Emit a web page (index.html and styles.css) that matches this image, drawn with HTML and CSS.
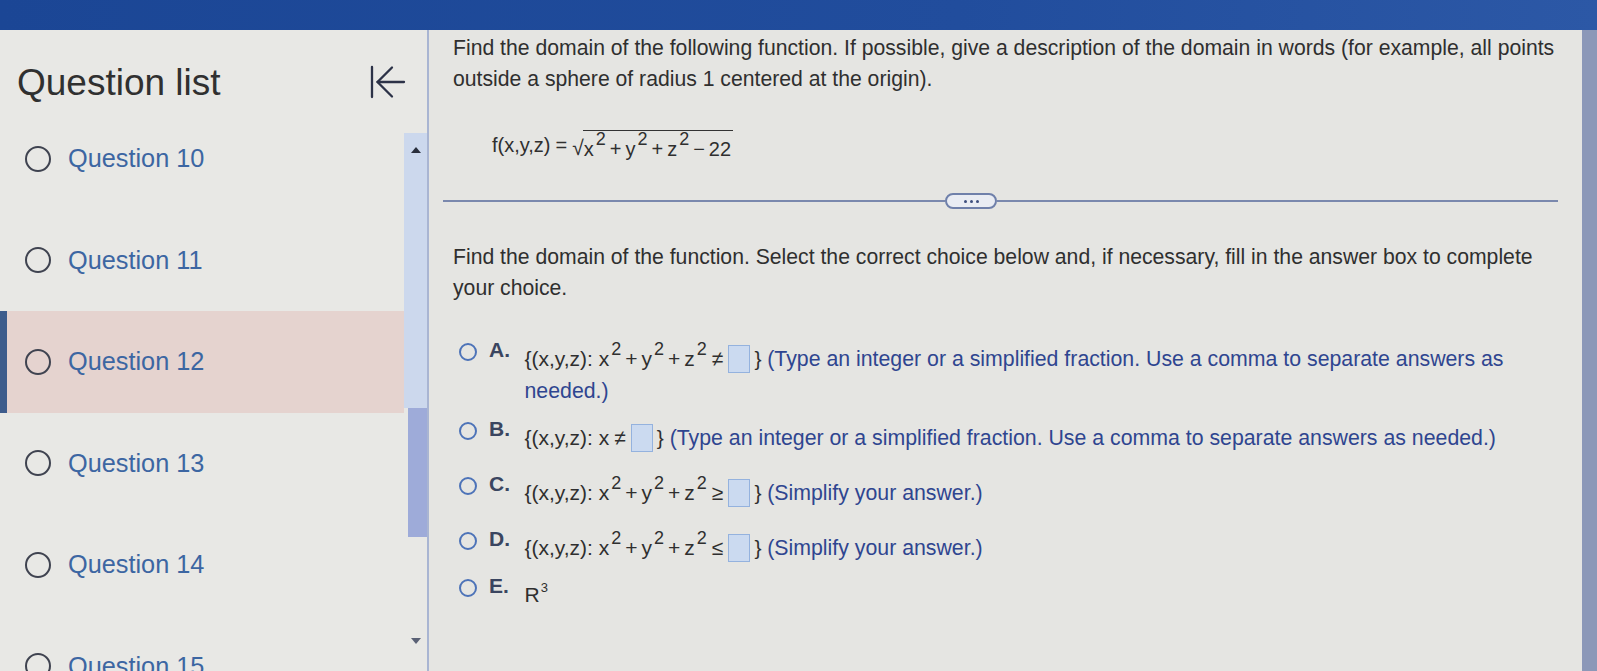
FILE: index.html
```html
<!DOCTYPE html>
<html lang="en">
<head>
<meta charset="utf-8">
<title>Question</title>
<link rel="stylesheet" href="styles.css">
</head>
<body>
<div class="topbar"></div>
<div class="app">
  <aside class="sidebar">
    <div class="side-head">
      <h1 class="side-title">Question list</h1>
      <button class="collapse" aria-label="Collapse question list">
        <svg width="36" height="34" viewBox="0 0 36 34" fill="none" stroke="#2c3247" stroke-width="2.3" stroke-linecap="round" stroke-linejoin="round">
          <path d="M2 2 V32"/>
          <path d="M7.5 17 H34"/>
          <path d="M22 2.5 L7.5 17 L22 31.5"/>
        </svg>
      </button>
    </div>
    <div class="side-body">
      <ul class="qlist">
        <li class="q"><span class="radio"></span><span class="qlabel">Question 10</span></li>
        <li class="q"><span class="radio"></span><span class="qlabel">Question 11</span></li>
        <li class="q current"><span class="radio"></span><span class="qlabel">Question 12</span></li>
        <li class="q"><span class="radio"></span><span class="qlabel">Question 13</span></li>
        <li class="q"><span class="radio"></span><span class="qlabel">Question 14</span></li>
        <li class="q"><span class="radio"></span><span class="qlabel">Question 15</span></li>
      </ul>
      <div class="vscroll">
        <div class="track-upper"><span class="arrow-up"></span></div>
        <div class="thumb"></div>
        <div class="track-lower"><span class="arrow-down"></span></div>
      </div>
    </div>
  </aside>

  <main class="content">
    <p class="prompt">Find the domain of the following function. If possible, give a description of the domain in words (for example, all points outside a sphere of radius 1 centered at the origin).</p>

    <div class="formula">
      <span>f(x,y,z)</span><span class="eq">=</span><span class="sqrt"><span class="rad">√</span><span class="radicand"><span>x</span><sup class="ex">2</sup><span class="op">+</span><span>y</span><sup class="ex">2</sup><span class="op">+</span><span>z</span><sup class="ex">2</sup><span class="op">−</span><span>22</span></span></span>
    </div>

    <div class="divider">
      <span class="rule"></span>
      <span class="more"><span class="dot"></span><span class="dot"></span><span class="dot"></span></span>
      <span class="rule"></span>
    </div>

    <p class="instr">Find the domain of the function. Select the correct choice below and, if necessary, fill in the answer box to complete your choice.</p>

    <ul class="options">
      <li class="opt sup">
        <span class="oradio"></span><span class="olabel">A.</span>
        <span class="obody"><span class="math"><span>{(x,y,z): x</span><sup class="ex">2</sup><span class="op">+</span><span>y</span><sup class="ex">2</sup><span class="op">+</span><span>z</span><sup class="ex">2</sup><span class="rel">≠</span><span class="box"></span><span>}</span></span> <span class="hint">(Type an integer or a simplified fraction. Use a comma to separate answers as</span> <span class="hint">needed.)</span></span>
      </li>
      <li class="opt">
        <span class="oradio"></span><span class="olabel">B.</span>
        <span class="obody"><span class="math"><span>{(x,y,z): x</span><span class="rel">≠</span><span class="box"></span><span>}</span></span> <span class="hint">(Type an integer or a simplified fraction. Use a comma to separate answers as needed.)</span></span>
      </li>
      <li class="opt sup">
        <span class="oradio"></span><span class="olabel">C.</span>
        <span class="obody"><span class="math"><span>{(x,y,z): x</span><sup class="ex">2</sup><span class="op">+</span><span>y</span><sup class="ex">2</sup><span class="op">+</span><span>z</span><sup class="ex">2</sup><span class="rel">≥</span><span class="box"></span><span>}</span></span> <span class="hint">(Simplify your answer.)</span></span>
      </li>
      <li class="opt sup">
        <span class="oradio"></span><span class="olabel">D.</span>
        <span class="obody"><span class="math"><span>{(x,y,z): x</span><sup class="ex">2</sup><span class="op">+</span><span>y</span><sup class="ex">2</sup><span class="op">+</span><span>z</span><sup class="ex">2</sup><span class="rel">≤</span><span class="box"></span><span>}</span></span> <span class="hint">(Simplify your answer.)</span></span>
      </li>
      <li class="opt">
        <span class="oradio"></span><span class="olabel">E.</span>
        <span class="obody"><span class="math"><span>R</span><sup class="cube">3</sup></span></span>
      </li>
    </ul>
  </main>

  <div class="edge"></div>
</div>
</body>
</html>
```

FILE: styles.css
```css
* { box-sizing: border-box; }

html, body {
  margin: 0;
  padding: 0;
  height: 100%;
  overflow: hidden;
}

body {
  background: #e5e5e2;
  font-family: "Liberation Sans", Arial, sans-serif;
  color: #2e2e2e;
}

.topbar {
  height: 30px;
  background: linear-gradient(90deg, #1b4695 0%, #214d9d 60%, #2c58a6 100%);
}

.app {
  display: flex;
  height: 641px;
}

/* ---------- sidebar ---------- */
.sidebar {
  width: 429px;
  flex: none;
  background: #e8e8e5;
  border-right: 2px solid #a9b5d2;
  display: flex;
  flex-direction: column;
}

.side-head {
  height: 78px;
  flex: none;
  display: flex;
  align-items: flex-start;
  justify-content: space-between;
  padding: 33px 0 0 17px;
}

.side-title {
  margin: 0;
  font-size: 37px;
  line-height: 40px;
  font-weight: 400;
  color: #303030;
}

.collapse {
  margin: 2px 21px 0 0;
  padding: 0;
  border: 0;
  background: none;
  width: 36px;
  height: 34px;
}
.collapse svg { display: block; }

.side-body {
  flex: 1;
  display: flex;
  min-height: 0;
  overflow: hidden;
}

.qlist {
  list-style: none;
  margin: 0;
  padding: 0;
  width: 404px;
  flex: none;
}

.q {
  height: 101.5px;
  display: flex;
  align-items: center;
  padding-left: 25px;
  position: relative;
}

.q.current { background: #e5d3cf; }
.q.current::before {
  content: "";
  position: absolute;
  left: 0;
  top: 0;
  bottom: 0;
  width: 7px;
  background: #3d5c8c;
}

.radio {
  width: 26px;
  height: 26px;
  border: 2.5px solid #3f4350;
  border-radius: 50%;
  flex: none;
}

.qlabel {
  margin-left: 17px;
  font-size: 25.3px;
  color: #3c66a2;
}

.vscroll {
  width: 23px;
  flex: none;
  margin-top: 25px;
  display: flex;
  flex-direction: column;
}

.track-upper {
  height: 275px;
  flex: none;
  background: #ccd8ed;
  display: flex;
  justify-content: center;
  padding-top: 14px;
}

.thumb {
  height: 129px;
  flex: none;
  margin-left: 4px;
  background: #9eabd9;
}

.track-lower {
  flex: 1;
  display: flex;
  justify-content: center;
  padding-top: 101px;
}

.arrow-up, .arrow-down {
  width: 0;
  height: 0;
  border-left: 5px solid transparent;
  border-right: 5px solid transparent;
}
.arrow-up { border-bottom: 6px solid #2a2f3d; }
.arrow-down { border-top: 6px solid #5a6175; }

/* ---------- main content ---------- */
.content {
  flex: 1;
  padding: 3px 0 0 24px;
  min-width: 0;
}

.prompt, .instr {
  margin: 0;
  font-size: 21.2px;
  color: #2f2f2f;
}

.prompt {
  width: 1115px;
  line-height: 30.5px;
}

.formula {
  margin: 31px 0 0 39px;
  height: 40px;
  display: flex;
  align-items: center;
  font-size: 20px;
  color: #2f2f2f;
}

.eq { margin: 0 5px 0 5px; }

.sqrt { display: inline-flex; align-items: flex-end; }
.rad { font-size: 21px; line-height: 25px; margin-right: -1px; }
.radicand {
  border-top: 1.5px solid #333;
  padding: 7px 2px 0 1px;
  line-height: 22px;
}

.ex {
  font-size: 18px;
  vertical-align: 11px;
  line-height: 0;
  margin-left: 2px;
}

.op { margin: 0 4px; }

.divider {
  margin: 28px 0 0 -10px;
  width: 1115px;
  height: 16px;
  display: flex;
  align-items: center;
}
.rule {
  height: 2px;
  background: #7a88ad;
}
.rule:first-child { width: 502px; }
.rule:last-child { flex: 1; }
.more {
  width: 52px;
  height: 16px;
  border: 2px solid #6f80aa;
  border-radius: 8px;
  background: #e9ecf3;
  display: flex;
  align-items: center;
  justify-content: center;
  gap: 3px;
  flex: none;
}
.dot {
  width: 3px;
  height: 3px;
  background: #3e4f7e;
  border-radius: 50%;
}

.instr {
  margin-top: 31.5px;
  width: 1100px;
  line-height: 31px;
}

.options {
  list-style: none;
  margin: 32.5px 0 0 0;
  padding: 0;
  width: 1085px;
}

.opt {
  display: flex;
  align-items: flex-start;
  margin-top: 15px;
  font-size: 21px;
  line-height: 32px;
}
.opt:first-child { margin-top: 0; }
.opt.sup { padding-top: 8px; }

.oradio {
  flex: none;
  width: 18px;
  height: 18px;
  margin: 0 0 0 5.5px;
  border: 2px solid #4d73b8;
  border-radius: 50%;
}

.olabel {
  flex: none;
  width: 35.5px;
  margin-left: 12.5px;
  margin-top: -9px;
  font-weight: 700;
  color: #3a4560;
}

.obody { flex: 1; color: #2f2f2f; }

.rel { margin: 0 5px; }

.box {
  display: inline-block;
  width: 22px;
  height: 28px;
  vertical-align: -7px;
  background: #cbdaf0;
  border: 1px solid #94b2de;
  margin-right: 4px;
}

.hint { color: #2f4590; font-size: 21.3px; }

.cube {
  font-size: 13px;
  vertical-align: 10px;
  line-height: 0;
  margin-left: 1px;
}

.edge {
  width: 15px;
  flex: none;
  background: #8c98b8;
}
```
